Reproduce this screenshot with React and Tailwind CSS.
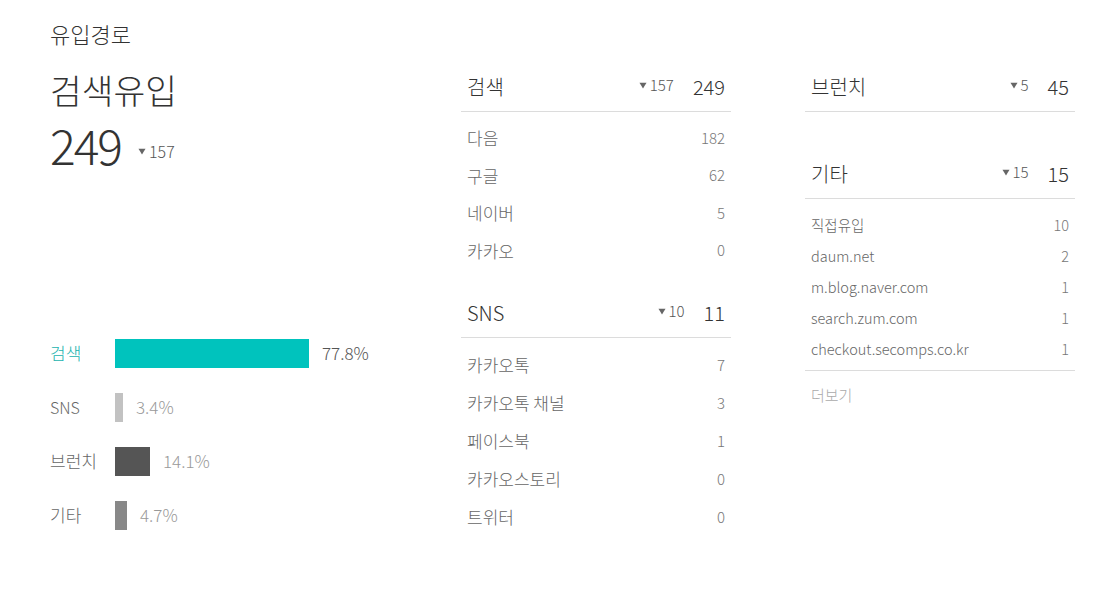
import React from "react";

const Caret = ({ className = "" }) => (
  <svg width="8" height="7" viewBox="0 0 8 7" className={className}>
    <path d="M0.5 0.8 L7.5 0.8 L4 6.5 Z" fill="#666" />
  </svg>
);

const Header = ({ title, delta, total }) => (
  <div className="h-[50px] flex items-center border-b border-[#dcdcdc] px-[6px]">
    <div className="flex-1 text-[20px] text-[#333]">{title}</div>
    <div className="flex items-center gap-[3px] text-[15px] text-[#555] mr-[19px] -mt-[3px]">
      <Caret />
      <span>{delta}</span>
    </div>
    <div className="text-[20px] text-[#333]">{total}</div>
  </div>
);

const Row = ({ label, value, h }) => (
  <div className={`flex items-center justify-between px-[6px] ${h}`}>
    <span className="text-[17px] text-[#666]">{label}</span>
    <span className="text-[15px] text-[#777]">{value}</span>
  </div>
);

const bars = [
  { label: "검색", w: 194, color: "bg-[#00c3bd]", pct: "77.8%", lc: "text-[#1ab3ae]", pc: "text-[#555]" },
  { label: "SNS", w: 8, color: "bg-[#c2c2c2]", pct: "3.4%", lc: "text-[#666]", pc: "text-[#999]" },
  { label: "브런치", w: 35, color: "bg-[#555555]", pct: "14.1%", lc: "text-[#666]", pc: "text-[#999]" },
  { label: "기타", w: 12, color: "bg-[#888888]", pct: "4.7%", lc: "text-[#666]", pc: "text-[#999]" },
];

export default function App() {
  return (
    <div
      className="w-[1117px] h-[590px] bg-white pt-[20px] pl-[50px] font-light"
      style={{ fontFamily: '"Noto Sans CJK KR", "Noto Sans", sans-serif' }}
    >
      <div className="h-[26px] leading-[26px] text-[22px] text-[#333]">유입경로</div>
      <div className="flex mt-[16px]">
        {/* left */}
        <div className="w-[411px]">
          <div className="h-[50px] leading-[50px] text-[34.5px] text-[#333] mt-[2px]">검색유입</div>
          <div className="mt-[4px] h-[52px] flex items-center">
            <span className="text-[48px] leading-[52px] text-[#333] tracking-[-2px]">249</span>
            <span className="ml-[17px] mt-[14px] flex items-center gap-[3px] text-[16px] text-[#555]">
              <Caret />
              157
            </span>
          </div>
          <div className="mt-[156px]">
            {bars.map((b) => (
              <div key={b.label} className="h-[54px] flex items-center">
                <span className={`w-[65px] ${b.label === "SNS" ? "text-[16px]" : "text-[17px]"} ${b.lc}`}>{b.label}</span>
                <div className={`h-[29px] ${b.color}`} style={{ width: b.w }} />
                <span className={`ml-[13px] text-[17px] ${b.pc}`}>{b.pct}</span>
              </div>
            ))}
          </div>
        </div>
        {/* middle */}
        <div className="w-[270px]">
          <Header title="검색" delta="157" total="249" />
          <div className="pt-[7px]">
            <Row label="다음" value="182" h="h-[37.5px]" />
            <Row label="구글" value="62" h="h-[37.5px]" />
            <Row label="네이버" value="5" h="h-[37.5px]" />
            <Row label="카카오" value="0" h="h-[37.5px]" />
          </div>
          <div className="mt-[19px]">
            <Header title="SNS" delta="10" total="11" />
          </div>
          <div className="pt-[8px]">
            <Row label="카카오톡" value="7" h="h-[38px]" />
            <Row label="카카오톡 채널" value="3" h="h-[38px]" />
            <Row label="페이스북" value="1" h="h-[38px]" />
            <Row label="카카오스토리" value="0" h="h-[38px]" />
            <Row label="트위터" value="0" h="h-[38px]" />
          </div>
        </div>
        {/* right */}
        <div className="w-[270px] ml-[74px]">
          <Header title="브런치" delta="5" total="45" />
          <div className="mt-[37px]">
            <Header title="기타" delta="15" total="15" />
          </div>
          <div className="pt-[10px] pb-[6px] border-b border-[#dcdcdc]">
            {[
              ["직접유입", "10"],
              ["daum.net", "2"],
              ["m.blog.naver.com", "1"],
              ["search.zum.com", "1"],
              ["checkout.secomps.co.kr", "1"],
            ].map(([l, v]) => (
              <div key={l} className="h-[31px] flex items-center justify-between px-[6px]">
                <span className="text-[14.5px] text-[#666]">{l}</span>
                <span className="text-[14.5px] text-[#777]">{v}</span>
              </div>
            ))}
          </div>
          <div className="pt-[15px] px-[6px] text-[15px] leading-[18px] text-[#aaa]">더보기</div>
        </div>
      </div>
    </div>
  );
}
